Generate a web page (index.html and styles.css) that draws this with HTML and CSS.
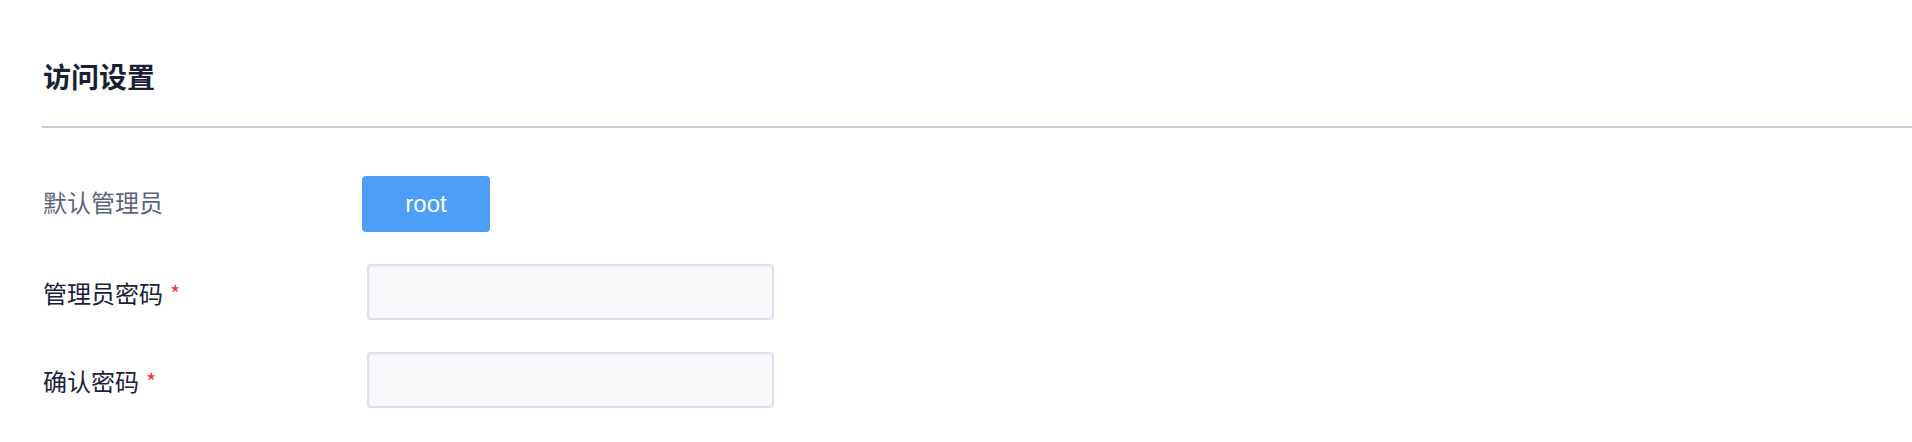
FILE: index.html
```html
<!DOCTYPE html>
<html lang="zh-CN">
<head>
<meta charset="utf-8">
<title>访问设置</title>
<link rel="stylesheet" href="styles.css">
</head>
<body>
<div class="page">
  <div class="header">
    <h2 class="title">访问设置</h2>
  </div>
  <div class="form">
    <div class="row">
      <div class="label label-muted">默认管理员</div>
      <div class="field">
        <button class="btn" type="button">root</button>
      </div>
    </div>
    <div class="row">
      <div class="label">管理员密码<span class="req">*</span></div>
      <div class="field">
        <input class="input" type="password">
      </div>
    </div>
    <div class="row">
      <div class="label">确认密码<span class="req">*</span></div>
      <div class="field">
        <input class="input" type="password">
      </div>
    </div>
  </div>
</div>
</body>
</html>
```
FILE: styles.css
```css
html, body {
  margin: 0;
  padding: 0;
  background: #ffffff;
}

body {
  font-family: "Noto Sans CJK SC", "Noto Sans", sans-serif;
  color: #1b2138;
}

.page {
  padding-left: 42px;
}

.header {
  padding-top: 58px;
  padding-bottom: 32px;
  border-bottom: 2px solid #c3cbd9;
}

.title {
  margin: 0;
  font-size: 28px;
  line-height: 36px;
  font-weight: 700;
  color: #1a1f36;
  padding-left: 1px;
}

.form {
  padding-top: 48px;
  display: flex;
  flex-direction: column;
  gap: 32px;
}

.row {
  display: flex;
  align-items: center;
  height: 56px;
}

.label {
  width: 320px;
  flex: none;
  font-size: 24px;
  line-height: 32px;
  color: #1b2138;
  padding-left: 1px;
  box-sizing: border-box;
}

.label-muted {
  color: #5c6479;
  position: relative;
  top: -2px;
}

.req {
  color: #f2343f;
  font-size: 22px;
  font-weight: 400;
  margin-left: 7px;
  vertical-align: 1px;
}

.field {
  display: flex;
  align-items: center;
}

.btn {
  width: 128px;
  height: 56px;
  border: none;
  border-radius: 4px;
  background: #4d9ef7;
  color: #ffffff;
  font-family: "Liberation Sans", Arial, sans-serif;
  font-size: 24px;
  padding: 0;
  cursor: pointer;
}

.input {
  margin-left: 5px;
  width: 407px;
  height: 56px;
  box-sizing: border-box;
  border: 2px solid #e0e0f1;
  border-radius: 4px;
  background: #f9f9fb;
  box-shadow: inset 0 1px 3px rgba(30, 30, 80, 0.05);
  outline: none;
  padding: 0 14px;
  font-size: 20px;
}
```
